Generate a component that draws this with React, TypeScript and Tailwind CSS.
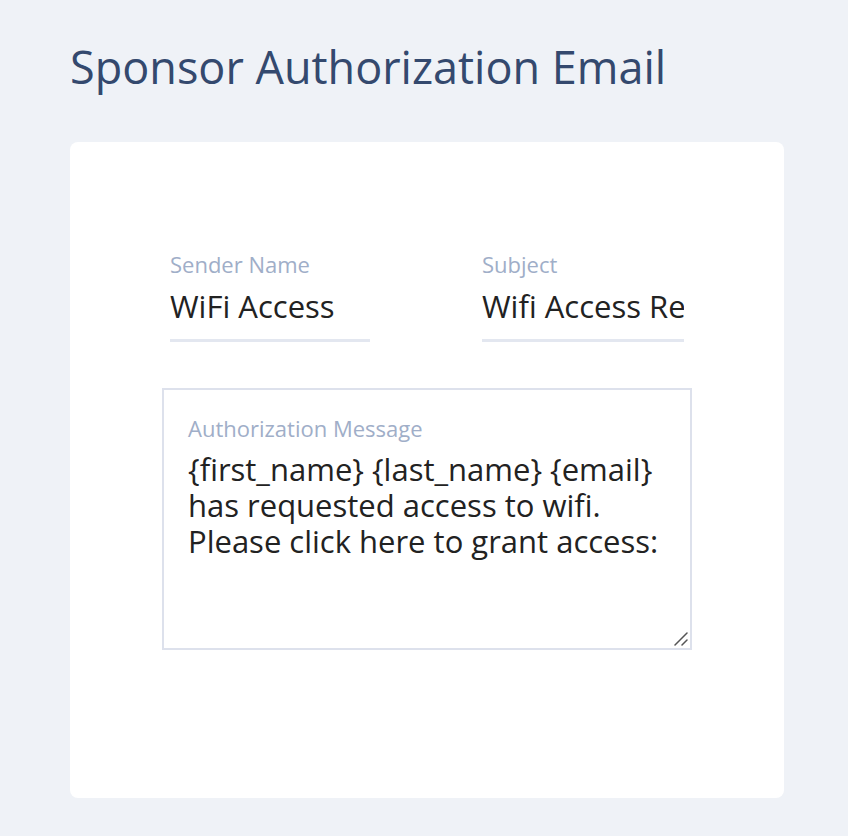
export default function App() {
  return (
    <div className="min-h-screen bg-[#eff2f7] px-[70px] pt-[37px] font-['Open_Sans',sans-serif]">
      {/* Heading */}
      <h1 className="text-[45px] leading-[60px] text-[#34496e] font-normal">Sponsor Authorization Email</h1>

      {/* Card */}
      <div className="mt-[45px] w-[714px] h-[656px] bg-white rounded-lg pt-[108px] px-[92px]">
        <div className="flex gap-[112px] px-[8px]">
          <div className="flex flex-col w-[200px]">
            <label className="text-[22px] leading-[28px] text-[#a0aec8]">Sender Name</label>
            <input
              className="mt-[8px] pb-[13px] text-[31px] leading-[40px] text-[#222] border-b-[3px] border-[#e3e7f0] outline-none bg-transparent"
              defaultValue="WiFi Access"
            />
          </div>
          <div className="flex flex-col w-[202px]">
            <label className="text-[22px] leading-[28px] text-[#a0aec8]">Subject</label>
            <input
              className="mt-[8px] pb-[13px] text-[31px] leading-[40px] text-[#222] border-b-[3px] border-[#e3e7f0] outline-none bg-transparent"
              defaultValue="Wifi Access Request"
            />
          </div>
        </div>

        {/* Message */}
        <div className="relative mt-[46px] w-[530px]">
          <label className="absolute left-[26px] top-[26px] text-[22px] leading-[28px] text-[#a0aec8]">
            Authorization Message
          </label>
          <textarea
            className="block w-[530px] h-[262px] border-2 border-[#dde1ec] pt-[61px] px-[24px] text-[31px] leading-[36px] text-[#222] outline-none resize-none overflow-hidden"
            defaultValue={'{first_name} {last_name} {email}\nhas requested access to wifi.\nPlease click here to grant access:'}
          />
          <svg className="absolute right-[4px] bottom-[4px] w-[14px] h-[14px]" viewBox="0 0 14 14">
            <path d="M1 13 L13 1 M8 13 L13 8" stroke="#555" strokeWidth="1.5" strokeLinecap="round" />
          </svg>
        </div>
      </div>
    </div>
  );
}
